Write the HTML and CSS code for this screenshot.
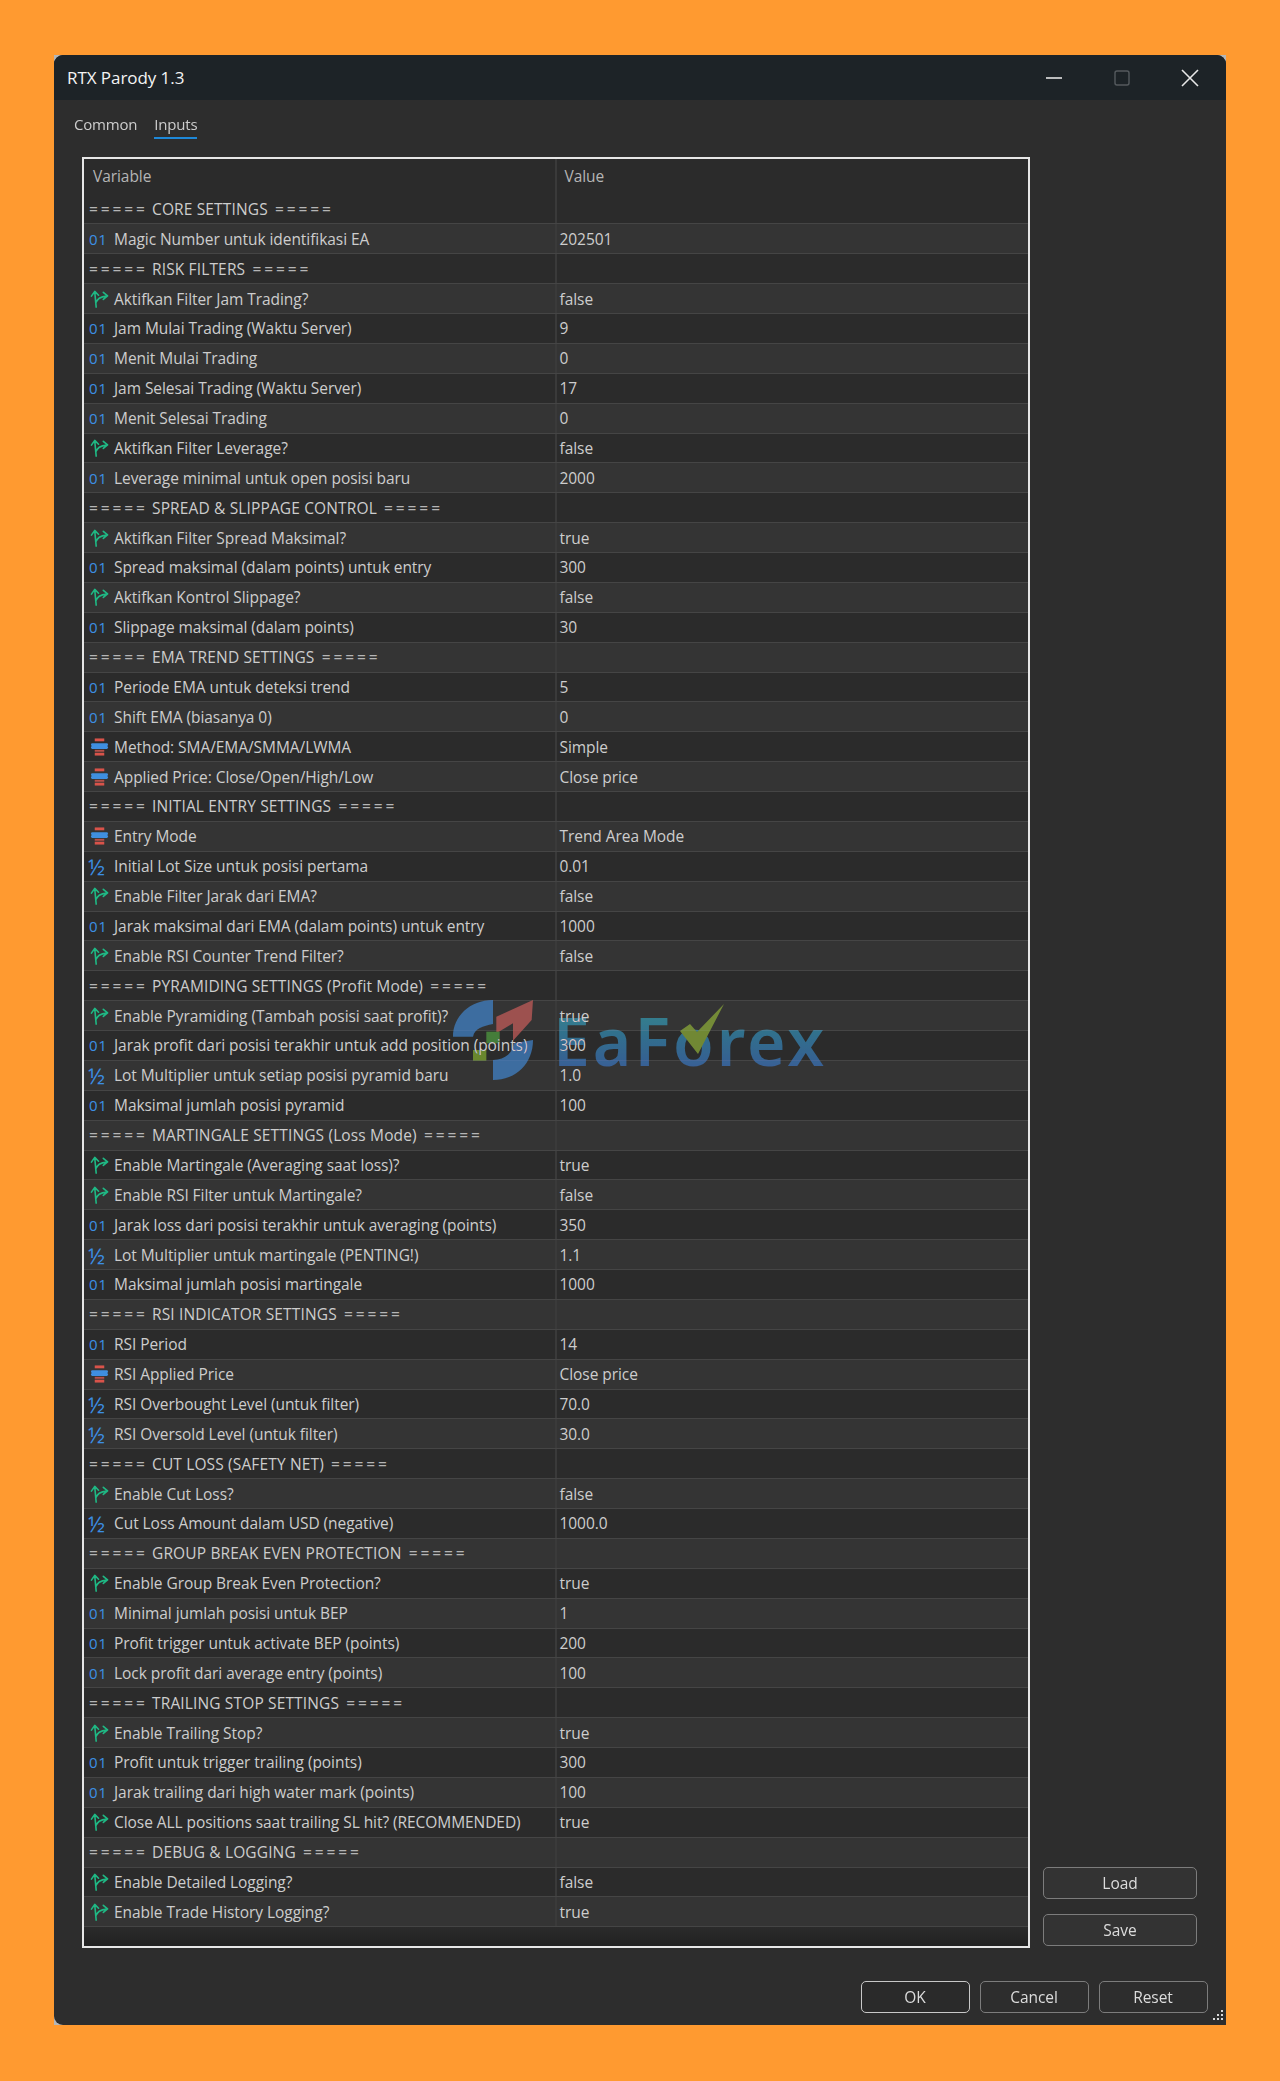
FILE: index.html
```html
<!DOCTYPE html>
<html lang="id">
<head>
<meta charset="utf-8">
<title>RTX Parody 1.3</title>
<link rel="stylesheet" href="styles.css">
</head>
<body>
<svg class="defs" width="0" height="0" aria-hidden="true">
  <symbol id="b" viewBox="0 0 20 20">
    <path d="M6.5 18.5 L5 2.5 M1.5 7 L5 2 L9 6 M6 14 C8 10 10 7.5 18 7 M14 3 L18.5 6.8 L14 10.5" fill="none" stroke="#1fb884" stroke-width="1.7" stroke-linejoin="round" stroke-linecap="round"/>
  </symbol>
  <symbol id="e" viewBox="0 0 20 20">
    <rect x="5" y="1" width="10" height="3" fill="#d9534a"/>
    <rect x="5" y="16" width="10" height="3" fill="#d9534a"/>
    <rect x="1" y="6" width="18" height="3" rx="1.5" fill="#3f8fe0"/>
    <rect x="1" y="9" width="18" height="3" rx="1.5" fill="#3f8fe0"/>
    <rect x="5" y="13" width="10" height="2" fill="#b8504a"/>
  </symbol>
</svg>
<main class="shell">
<div class="frame">
<div class="window">
  <header class="titlebar">
    <span class="title">RTX Parody 1.3</span>
    <div class="controls">
      <svg class="ctl" viewBox="0 0 18 18"><path d="M1 9H17" stroke="#e4e4e4" stroke-width="1.6"/></svg>
      <svg class="ctl" viewBox="0 0 18 18"><rect x="2" y="2" width="14" height="14" rx="2" fill="none" stroke="#555a5e" stroke-width="1.4"/></svg>
      <svg class="ctl" viewBox="0 0 18 18"><path d="M1 1L17 17M17 1L1 17" stroke="#e8e8e8" stroke-width="1.6"/></svg>
    </div>
  </header>
  <nav class="tabs">
    <span class="tab">Common</span>
    <span class="tab active">Inputs</span>
  </nav>
  <div class="content">
    <section class="table">
      <div class="thead"><span class="th name">Variable</span><span class="th val">Value</span></div>
      <div class="tbody">
        <div class="row group"><span class="n"><b class="eq">=====</b> CORE SETTINGS <b class="eq">=====</b></span><span class="v"></span></div>
        <div class="row"><span class="n"><i class="num">01</i>Magic Number untuk identifikasi EA</span><span class="v">202501</span></div>
        <div class="row group"><span class="n"><b class="eq">=====</b> RISK FILTERS <b class="eq">=====</b></span><span class="v"></span></div>
        <div class="row"><span class="n"><svg class="ic"><use href="#b"/></svg>Aktifkan Filter Jam Trading?</span><span class="v">false</span></div>
        <div class="row"><span class="n"><i class="num">01</i>Jam Mulai Trading (Waktu Server)</span><span class="v">9</span></div>
        <div class="row"><span class="n"><i class="num">01</i>Menit Mulai Trading</span><span class="v">0</span></div>
        <div class="row"><span class="n"><i class="num">01</i>Jam Selesai Trading (Waktu Server)</span><span class="v">17</span></div>
        <div class="row"><span class="n"><i class="num">01</i>Menit Selesai Trading</span><span class="v">0</span></div>
        <div class="row"><span class="n"><svg class="ic"><use href="#b"/></svg>Aktifkan Filter Leverage?</span><span class="v">false</span></div>
        <div class="row"><span class="n"><i class="num">01</i>Leverage minimal untuk open posisi baru</span><span class="v">2000</span></div>
        <div class="row group"><span class="n"><b class="eq">=====</b> SPREAD &amp; SLIPPAGE CONTROL <b class="eq">=====</b></span><span class="v"></span></div>
        <div class="row"><span class="n"><svg class="ic"><use href="#b"/></svg>Aktifkan Filter Spread Maksimal?</span><span class="v">true</span></div>
        <div class="row"><span class="n"><i class="num">01</i>Spread maksimal (dalam points) untuk entry</span><span class="v">300</span></div>
        <div class="row"><span class="n"><svg class="ic"><use href="#b"/></svg>Aktifkan Kontrol Slippage?</span><span class="v">false</span></div>
        <div class="row"><span class="n"><i class="num">01</i>Slippage maksimal (dalam points)</span><span class="v">30</span></div>
        <div class="row group"><span class="n"><b class="eq">=====</b> EMA TREND SETTINGS <b class="eq">=====</b></span><span class="v"></span></div>
        <div class="row"><span class="n"><i class="num">01</i>Periode EMA untuk deteksi trend</span><span class="v">5</span></div>
        <div class="row"><span class="n"><i class="num">01</i>Shift EMA (biasanya 0)</span><span class="v">0</span></div>
        <div class="row"><span class="n"><svg class="ic"><use href="#e"/></svg>Method: SMA/EMA/SMMA/LWMA</span><span class="v">Simple</span></div>
        <div class="row"><span class="n"><svg class="ic"><use href="#e"/></svg>Applied Price: Close/Open/High/Low</span><span class="v">Close price</span></div>
        <div class="row group"><span class="n"><b class="eq">=====</b> INITIAL ENTRY SETTINGS <b class="eq">=====</b></span><span class="v"></span></div>
        <div class="row"><span class="n"><svg class="ic"><use href="#e"/></svg>Entry Mode</span><span class="v">Trend Area Mode</span></div>
        <div class="row"><span class="n"><i class="half">½</i>Initial Lot Size untuk posisi pertama</span><span class="v">0.01</span></div>
        <div class="row"><span class="n"><svg class="ic"><use href="#b"/></svg>Enable Filter Jarak dari EMA?</span><span class="v">false</span></div>
        <div class="row"><span class="n"><i class="num">01</i>Jarak maksimal dari EMA (dalam points) untuk entry</span><span class="v">1000</span></div>
        <div class="row"><span class="n"><svg class="ic"><use href="#b"/></svg>Enable RSI Counter Trend Filter?</span><span class="v">false</span></div>
        <div class="row group"><span class="n"><b class="eq">=====</b> PYRAMIDING SETTINGS (Profit Mode) <b class="eq">=====</b></span><span class="v"></span></div>
        <div class="row"><span class="n"><svg class="ic"><use href="#b"/></svg>Enable Pyramiding (Tambah posisi saat profit)?</span><span class="v">true</span></div>
        <div class="row"><span class="n"><i class="num">01</i>Jarak profit dari posisi terakhir untuk add position (points)</span><span class="v">300</span></div>
        <div class="row"><span class="n"><i class="half">½</i>Lot Multiplier untuk setiap posisi pyramid baru</span><span class="v">1.0</span></div>
        <div class="row"><span class="n"><i class="num">01</i>Maksimal jumlah posisi pyramid</span><span class="v">100</span></div>
        <div class="row group"><span class="n"><b class="eq">=====</b> MARTINGALE SETTINGS (Loss Mode) <b class="eq">=====</b></span><span class="v"></span></div>
        <div class="row"><span class="n"><svg class="ic"><use href="#b"/></svg>Enable Martingale (Averaging saat loss)?</span><span class="v">true</span></div>
        <div class="row"><span class="n"><svg class="ic"><use href="#b"/></svg>Enable RSI Filter untuk Martingale?</span><span class="v">false</span></div>
        <div class="row"><span class="n"><i class="num">01</i>Jarak loss dari posisi terakhir untuk averaging (points)</span><span class="v">350</span></div>
        <div class="row"><span class="n"><i class="half">½</i>Lot Multiplier untuk martingale (PENTING!)</span><span class="v">1.1</span></div>
        <div class="row"><span class="n"><i class="num">01</i>Maksimal jumlah posisi martingale</span><span class="v">1000</span></div>
        <div class="row group"><span class="n"><b class="eq">=====</b> RSI INDICATOR SETTINGS <b class="eq">=====</b></span><span class="v"></span></div>
        <div class="row"><span class="n"><i class="num">01</i>RSI Period</span><span class="v">14</span></div>
        <div class="row"><span class="n"><svg class="ic"><use href="#e"/></svg>RSI Applied Price</span><span class="v">Close price</span></div>
        <div class="row"><span class="n"><i class="half">½</i>RSI Overbought Level (untuk filter)</span><span class="v">70.0</span></div>
        <div class="row"><span class="n"><i class="half">½</i>RSI Oversold Level (untuk filter)</span><span class="v">30.0</span></div>
        <div class="row group"><span class="n"><b class="eq">=====</b> CUT LOSS (SAFETY NET) <b class="eq">=====</b></span><span class="v"></span></div>
        <div class="row"><span class="n"><svg class="ic"><use href="#b"/></svg>Enable Cut Loss?</span><span class="v">false</span></div>
        <div class="row"><span class="n"><i class="half">½</i>Cut Loss Amount dalam USD (negative)</span><span class="v">1000.0</span></div>
        <div class="row group"><span class="n"><b class="eq">=====</b> GROUP BREAK EVEN PROTECTION <b class="eq">=====</b></span><span class="v"></span></div>
        <div class="row"><span class="n"><svg class="ic"><use href="#b"/></svg>Enable Group Break Even Protection?</span><span class="v">true</span></div>
        <div class="row"><span class="n"><i class="num">01</i>Minimal jumlah posisi untuk BEP</span><span class="v">1</span></div>
        <div class="row"><span class="n"><i class="num">01</i>Profit trigger untuk activate BEP (points)</span><span class="v">200</span></div>
        <div class="row"><span class="n"><i class="num">01</i>Lock profit dari average entry (points)</span><span class="v">100</span></div>
        <div class="row group"><span class="n"><b class="eq">=====</b> TRAILING STOP SETTINGS <b class="eq">=====</b></span><span class="v"></span></div>
        <div class="row"><span class="n"><svg class="ic"><use href="#b"/></svg>Enable Trailing Stop?</span><span class="v">true</span></div>
        <div class="row"><span class="n"><i class="num">01</i>Profit untuk trigger trailing (points)</span><span class="v">300</span></div>
        <div class="row"><span class="n"><i class="num">01</i>Jarak trailing dari high water mark (points)</span><span class="v">100</span></div>
        <div class="row"><span class="n"><svg class="ic"><use href="#b"/></svg>Close ALL positions saat trailing SL hit? (RECOMMENDED)</span><span class="v">true</span></div>
        <div class="row group"><span class="n"><b class="eq">=====</b> DEBUG &amp; LOGGING <b class="eq">=====</b></span><span class="v"></span></div>
        <div class="row"><span class="n"><svg class="ic"><use href="#b"/></svg>Enable Detailed Logging?</span><span class="v">false</span></div>
        <div class="row"><span class="n"><svg class="ic"><use href="#b"/></svg>Enable Trade History Logging?</span><span class="v">true</span></div>
      </div>
      <div class="filler"></div>
      <div class="watermark">
        <svg class="wm-logo" viewBox="0 0 240 240">
          <path d="M120 0C50 0 0 50 0 110L60 110C65 85 90 78 120 72Z" fill="#3f80c4"/>
          <path d="M130 50L240 0L236 60L180 122L180 70L130 100Z" fill="#c05a58"/>
          <path d="M240 120C240 190 190 240 120 240L120 180C160 180 180 155 182 130Z" fill="#3f80c4"/>
          <rect x="60" y="150" width="40" height="32" fill="#7fa630"/>
          <rect x="100" y="95" width="40" height="35" fill="#4f9a40"/>
        </svg>
        <span class="wm-text">EaForex</span>
        <svg class="wm-check" viewBox="0 0 44 50"><path d="M0 27L10 20L17 28L44 0L18 50Z" fill="#8aa838"/></svg>
      </div>
    </section>
    <aside class="side">
      <button class="btn side-btn" type="button">Load</button>
      <button class="btn side-btn" type="button">Save</button>
    </aside>
  </div>
  <footer class="footer">
    <button class="btn foot-btn primary" type="button">OK</button>
    <button class="btn foot-btn" type="button">Cancel</button>
    <button class="btn foot-btn" type="button">Reset</button>
    <svg class="grip" viewBox="0 0 14 14"><path d="M11 1h2v2h-2zM7 5h2v2H7zM11 5h2v2h-2zM3 9h2v2H3zM7 9h2v2H7zM11 9h2v2h-2z" fill="#d8d8d8"/></svg>
  </footer>
</div>
</div>
</main>
</body>
</html>
```
FILE: styles.css
```css
* { box-sizing: border-box; }
html, body { margin: 0; }
body {
  height: 2081px;
  background: #ff9a30;
  font-family: "Open Sans", "Noto Sans", sans-serif;
  font-size: 15.5px;
  letter-spacing: -0.06px;
  color: #cdcdcd;
  overflow: hidden;
}
.defs { position: absolute; }
.shell { padding: 55px 54px 0 54px; }
.frame { width: 1172px; height: 1970px; background: #b4b6b8; }
.window {
  position: relative;
  width: 100%;
  height: 100%;
  background: #2d2d2d;
  border-radius: 9px 9px 0 9px;
  display: flex;
  flex-direction: column;
  filter: blur(.4px);
}
.titlebar {
  height: 45px;
  flex: none;
  background: #1d2327;
  border-radius: 9px 9px 0 0;
  display: flex;
  align-items: center;
  justify-content: space-between;
  padding: 0 27px 0 13px;
}
.title { color: #f4f4f4; font-size: 17px; }
.controls { display: flex; gap: 50px; align-items: center; }
.ctl { width: 18px; height: 18px; display: block; }
.tabs {
  height: 57px;
  flex: none;
  display: flex;
  gap: 17px;
  padding: 11px 0 0 20px;
}
.tab { height: 28px; line-height: 26px; font-size: 15px; letter-spacing: -0.2px; }
.tab.active { border-bottom: 2px solid #1e88d8; }
.content { display: flex; align-items: flex-end; padding-left: 28px; gap: 13px; }
.table {
  position: relative;
  width: 948px;
  height: 1791px;
  flex: none;
  border: 2px solid #e6e6e6;
  background: #2b2b2b;
  display: flex;
  flex-direction: column;
}
.thead {
  height: 35.5px;
  flex: none;
  display: grid;
  grid-template-columns: 472.5px 1fr;
}
.th { line-height: 35px; color: #b5b5b5; }
.th.name { padding-left: 9px; border-right: 2px solid #3a3a3a; }
.th.val { padding-left: 8px; }
.tbody { flex: none; }
.row {
  height: 29.88px;
  display: grid;
  grid-template-columns: 472.5px 1fr;
  align-items: stretch;
  background: #2b2b2b;
  border-bottom: 1px solid #454545;
  white-space: nowrap;
}
.row:nth-child(even) { background: #343434; }
.n {
  display: flex;
  align-items: center;
  padding-left: 30px;
  border-right: 2px solid #3a3a3a;
  position: relative;
}
.group .n { padding-left: 5px; white-space: pre; letter-spacing: .14px; }
.eq { font-weight: 400; letter-spacing: 2.9px; color: #b5b5b5; }
.eq:last-child { margin-left: 3px; }
.v { display: flex; align-items: center; padding-left: 3px; }
.num, .half {
  position: absolute;
  left: 5px;
  top: 50%;
  font-style: normal;
  color: #3c8fe4;
  transform: translateY(-50%);
}
.num { font-size: 15px; letter-spacing: .6px; }
.half { font-size: 22px; left: 4px; }
.ic {
  position: absolute;
  left: 6px;
  top: 50%;
  width: 19px;
  height: 19px;
  transform: translateY(-50%);
}
.filler { flex: 1; background: linear-gradient(#2b2b2b, #212121); }
.watermark {
  position: absolute;
  left: 369px;
  top: 841px;
  width: 380px;
  height: 80px;
  mix-blend-mode: lighten;
  opacity: .75;
}
.wm-logo { position: absolute; left: 0; top: 0; width: 80px; height: 80px; }
.wm-text {
  position: absolute;
  left: 100px;
  top: 5px;
  font-family: "Noto Sans", sans-serif;
  font-size: 66px;
  line-height: 70px;
  font-weight: 600;
  letter-spacing: 3px;
  color: transparent;
  background: linear-gradient(#2f9fa8, #3b68b8);
  -webkit-background-clip: text;
  background-clip: text;
}
.wm-check { position: absolute; left: 227px; top: 4px; width: 44px; height: 50px; }
.side { width: 154px; flex: none; display: flex; flex-direction: column; gap: 15px; padding-bottom: 2px; }
.btn {
  font: inherit;
  letter-spacing: inherit;
  color: #dcdcdc;
  background: #333;
  border: 1.5px solid #7c7c7c;
  border-radius: 5px;
  padding: 0;
}
.side-btn { height: 32px; }
.footer {
  flex: 1;
  position: relative;
  display: flex;
  justify-content: flex-end;
  gap: 10px;
  padding: 33px 18.5px 0 0;
}
.foot-btn { width: 109px; height: 32px; background: #2d2d2d; }
.foot-btn.primary { border-color: #c8c8c8; background: #2a2a2a; }
.grip { position: absolute; right: 2px; bottom: 2px; width: 14px; height: 14px; }
```
